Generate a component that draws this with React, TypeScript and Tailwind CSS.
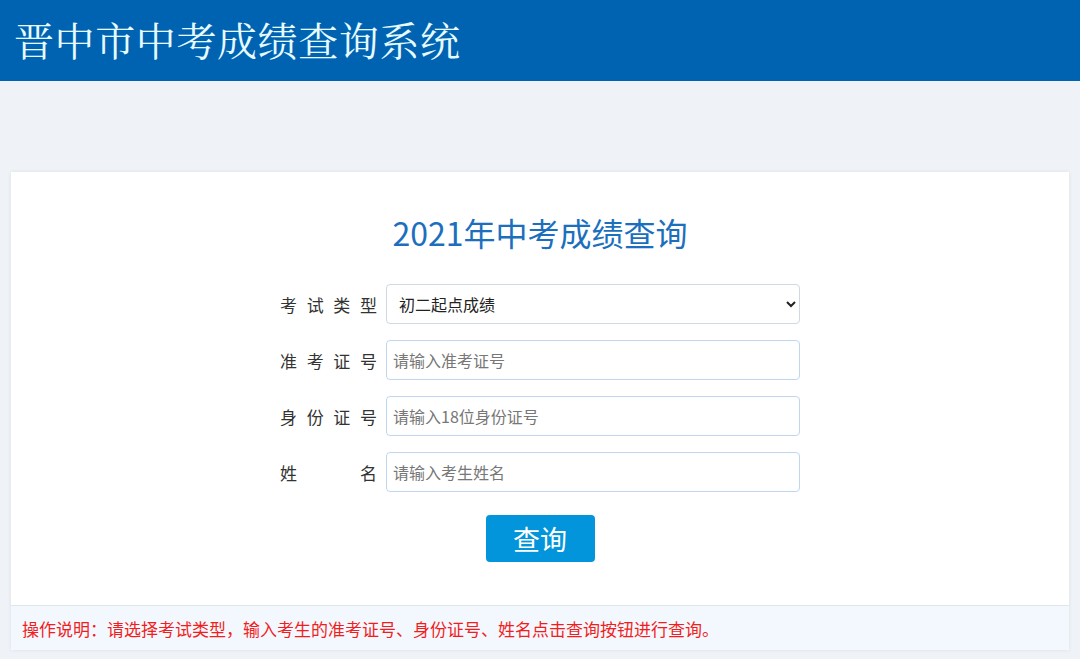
import React from "react";

const sans = '"Noto Sans CJK SC", "Noto Sans", sans-serif';

function Row({ label, children }: { label: React.ReactNode; children: React.ReactNode }) {
  return (
    <div className="flex items-center h-10">
      <div className="w-[97px] mr-[9px] text-[17px] text-[#333] flex justify-between leading-none">{label}</div>
      {children}
    </div>
  );
}

function Spaced({ text }: { text: string }) {
  return (
    <>
      {text.split("").map((c, i) => (
        <span key={i}>{c}</span>
      ))}
    </>
  );
}

export default function App() {
  return (
    <div className="min-h-[659px] bg-[#eff3f7] flex flex-col" style={{ fontFamily: sans }}>
      <header className="h-[81px] bg-[#0063b1] flex items-center pl-[14px]">
        <h1
          className="text-[40px] text-[#e6fbff] leading-none tracking-[0.6px] pb-[4px]"
          style={{ fontFamily: '"Noto Serif CJK SC", "Noto Sans CJK SC", serif' }}
        >
          晋中市中考成绩查询系统
        </h1>
      </header>
      <div className="mt-[91px] mx-[11px] bg-white shadow-[0_0_4px_rgba(0,0,0,0.08)] flex flex-col">
        <div className="pt-10 flex flex-col items-center">
          <h2 className="text-[32px] leading-[40px] text-[#1b6fbd]">2021年中考成绩查询</h2>
          <div className="mt-8 flex flex-col gap-4">
            <Row label={<Spaced text="考试类型" />}>
              <select className="w-[414px] h-10 border border-[#cfd8e3] rounded-[4px] px-2 text-[16px] text-[#222] bg-white outline-none">
                <option>初二起点成绩</option>
              </select>
            </Row>
            <Row label={<Spaced text="准考证号" />}>
              <input
                className="w-[414px] h-10 border border-[#bfd7ee] rounded-[4px] px-[6px] text-[16px] text-[#222] placeholder:text-[#777] outline-none"
                placeholder="请输入准考证号"
              />
            </Row>
            <Row label={<Spaced text="身份证号" />}>
              <input
                className="w-[414px] h-10 border border-[#bfd7ee] rounded-[4px] px-[6px] text-[16px] text-[#222] placeholder:text-[#777] outline-none"
                placeholder="请输入18位身份证号"
              />
            </Row>
            <Row label={<><span>姓</span><span>名</span></>}>
              <input
                className="w-[414px] h-10 border border-[#bfd7ee] rounded-[4px] px-[6px] text-[16px] text-[#222] placeholder:text-[#777] outline-none"
                placeholder="请输入考生姓名"
              />
            </Row>
          </div>
          <button className="mt-[23px] w-[109px] h-[47px] rounded-[4px] bg-[#0295dc] text-white text-[27px] leading-none">
            查询
          </button>
        </div>
        <div className="mt-[43px] h-[45px] border-t border-[#dde5ee] bg-[#f2f8fd] flex items-center pl-[11px]">
          <p className="text-[17px] text-[#f21d1d] leading-none">
            操作说明：请选择考试类型，输入考生的准考证号、身份证号、姓名点击查询按钮进行查询。
          </p>
        </div>
      </div>
    </div>
  );
}
